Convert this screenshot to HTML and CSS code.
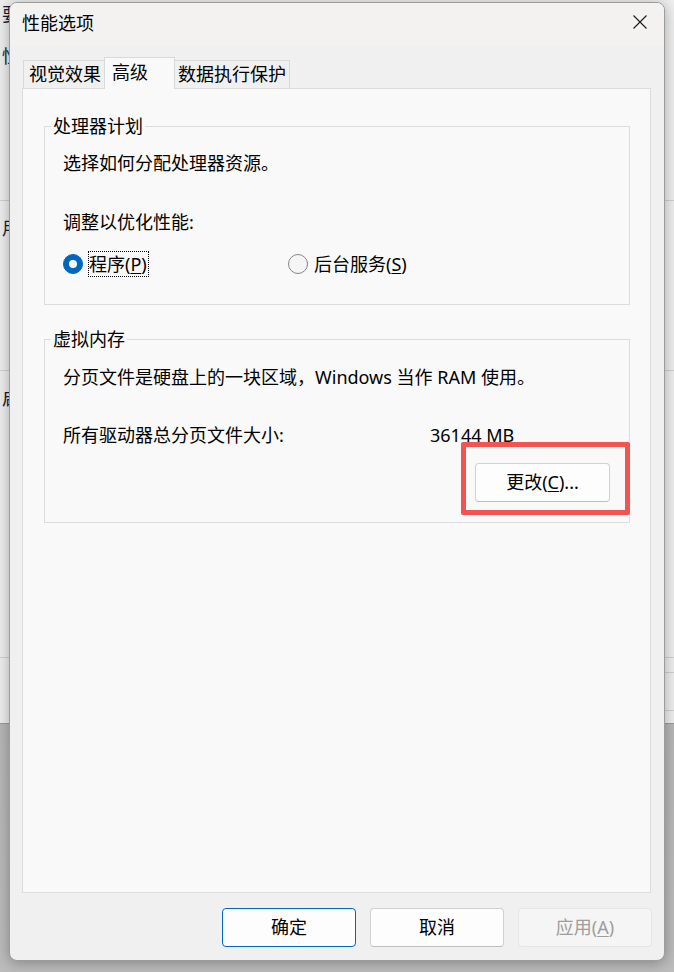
FILE: index.html
```html
<!DOCTYPE html>
<html lang="zh-CN">
<head>
    <meta charset="UTF-8">
    <meta name="viewport" content="width=device-width, initial-scale=1.0">
    <title>性能选项</title>
    <link rel="stylesheet" href="styles.css">
</head>
<body>
    <!-- 后面的系统属性窗口 -->
    <div class="behind">
        <p class="b-line">要进行大多数更改，你必须作为管理员登录。</p>
        <p class="b-line b-perf">性能</p>
        <div class="b-rule b-rule1"></div>
        <p class="b-line b-after">用户配置文件</p>
        <div class="b-rule b-rule2"></div>
        <p class="b-line b-after">启动和故障恢复</p>
        <div class="b-rule b-rule3"></div>
        <div class="b-rule b-rule4"></div>
        <div class="b-rule b-rule5"></div>
    </div>

    <div class="dialog">
        <div class="titlebar">
            <span class="title">性能选项</span>
            <svg class="close" width="14" height="14" viewBox="0 0 14 14">
                <path d="M0.5 0.5 L13.5 13.5 M13.5 0.5 L0.5 13.5" stroke="#1a1a1a" stroke-width="1.1" fill="none"/>
            </svg>
        </div>

        <div class="tabs">
            <div class="tab tab-visual">视觉效果</div>
            <div class="tab active">高级</div>
            <div class="tab tab-dep">数据执行保护</div>
        </div>

        <div class="panel">
            <fieldset class="group group-cpu">
                <legend>处理器计划</legend>
                <p class="line">选择如何分配处理器资源。</p>
                <p class="line line-adjust">调整以优化性能:</p>
                <div class="radios">
                    <label class="radio radio-first checked"><span class="dot"></span><span class="radio-text focus">程序(<u>P</u>)</span></label>
                    <label class="radio"><span class="dot"></span><span class="radio-text">后台服务(<u>S</u>)</span></label>
                </div>
            </fieldset>

            <fieldset class="group group-mem">
                <legend>虚拟内存</legend>
                <p class="line">分页文件是硬盘上的一块区域，Windows 当作 RAM 使用。</p>
                <div class="line size-row">
                    <span class="size-label">所有驱动器总分页文件大小:</span>
                    <span>36144 MB</span>
                </div>
                <div class="change-row">
                    <div class="mark">
                        <button class="btn btn-change">更改(<u>C</u>)...</button>
                        <span class="highlight"></span>
                    </div>
                </div>
            </fieldset>
        </div>

        <div class="footer">
            <button class="btn default">确定</button>
            <button class="btn">取消</button>
            <button class="btn" disabled>应用(<u>A</u>)</button>
        </div>
    </div>
</body>
</html>
```

FILE: styles.css
```css
* {
    box-sizing: border-box;
}
body {
    margin: 0;
    width: 674px;
    height: 972px;
    overflow: hidden;
    position: relative;
    background: linear-gradient(#a8a8a8, #bcbcbc);
    font-family: "Noto Sans", "Noto Sans CJK SC", sans-serif;
    font-size: 18px;
    color: #000;
}
p {
    margin: 0;
}
u {
    text-underline-offset: 2px;
}

/* background window, only its left edge shows */
.behind {
    position: absolute;
    left: 0;
    top: 0;
    width: 674px;
    height: 724px;
    padding: 1px 0 0 2px;
    background: #eeeeee;
    border-bottom: 1px solid #9a9a9a;
    font-family: "Noto Sans CJK SC", sans-serif;
    color: #1a1a3a;
}
.b-line {
    width: 8px;
    height: 24px;
    line-height: 24px;
    overflow: hidden;
    white-space: nowrap;
}
.b-perf {
    margin-top: 18px;
}
.b-after {
    margin-top: 14px;
}
.b-rule {
    height: 1px;
    margin-left: -2px;
    background: #d0d0d0;
}
.b-rule1 {
    margin-top: 133px;
}
.b-rule2 {
    margin-top: 131px;
}
.b-rule3 {
    margin-top: 248px;
}
.b-rule4 {
    margin-top: 14px;
    margin-left: 600px;
}
.b-rule5 {
    margin-top: 37px;
    margin-left: 600px;
}

/* dialog */
.dialog {
    position: absolute;
    left: 9px;
    top: 2px;
    width: 656px;
    height: 959px;
    display: flex;
    flex-direction: column;
    overflow: hidden;
    background: #f0f0f0;
    border: 1px solid #9c9c9c;
    border-radius: 8px;
    box-shadow: 0 2px 14px rgba(0,0,0,0.3);
}
.titlebar {
    flex: none;
    height: 42px;
    display: flex;
    align-items: flex-start;
    justify-content: space-between;
    padding: 7px 17px 0 12px;
    background: #f3f2f1;
}
.title {
    line-height: 24px;
    font-family: "Noto Sans CJK SC", sans-serif;
}
.close {
    margin-top: 5px;
}

.tabs {
    flex: none;
    height: 31px;
    margin-top: 12px;
    padding-left: 13px;
    display: flex;
    align-items: flex-end;
    position: relative;
    z-index: 1;
}
.tab {
    height: 28px;
    line-height: 26px;
    padding-left: 5px;
    white-space: nowrap;
    background: #f0f0f0;
    border: 1px solid #d9d9d9;
    border-bottom: none;
}
.tab-visual {
    width: 82px;
}
.tab.active {
    width: 71px;
    height: 32px;
    line-height: 28px;
    margin-left: -1px;
    margin-bottom: -1px;
    padding-left: 7px;
    background: #f9f9f9;
}
.tab-dep {
    width: 116px;
    margin-left: -1px;
    padding-left: 3px;
}

.panel {
    flex: none;
    height: 805px;
    margin: 0 13px 0 12px;
    padding: 0 20px 0 21px;
    background: #f9f9f9;
    border: 1px solid #dcdcdc;
}

.group {
    min-width: 0;
    margin: 0;
    border: 1px solid #dcdcdc;
    padding: 13px 19px 27px 6px;
}
.group legend {
    height: 24px;
    line-height: 24px;
    padding: 0 2px;
}
.group-cpu {
    margin-top: 25px;
}
.group-mem {
    margin-top: 22px;
    padding-top: 14px;
    padding-bottom: 20px;
}
.line {
    height: 24px;
    line-height: 24px;
    padding-left: 12px;
    white-space: nowrap;
}
.line-adjust {
    margin-top: 35px;
}

.radios {
    display: flex;
    height: 26px;
    margin-top: 17px;
    padding-left: 12px;
}
.radio {
    display: flex;
    align-items: center;
    gap: 5px;
    height: 26px;
}
.radio-first {
    width: 225px;
}
.dot {
    flex: none;
    width: 20px;
    height: 20px;
    border-radius: 50%;
    border: 1px solid #878787;
    background: #f5f5f5;
}
.radio.checked .dot {
    display: flex;
    align-items: center;
    justify-content: center;
    border-color: #0067c0;
    background: #0067c0;
}
.radio.checked .dot::after {
    content: "";
    width: 8px;
    height: 8px;
    border-radius: 50%;
    background: #fff;
}
.radio-text {
    line-height: 24px;
    padding-right: 1px;
    border: 1px solid transparent;
    white-space: nowrap;
}
.radio-text.focus {
    border: 1px dotted #000;
}

.size-row {
    display: flex;
    margin-top: 34px;
}
.size-label {
    width: 367px;
    flex: none;
}
.change-row {
    display: flex;
    justify-content: flex-end;
    margin-top: 16px;
}
.mark {
    position: relative;
}
.highlight {
    position: absolute;
    left: -14px;
    right: -20px;
    top: -21px;
    bottom: -13px;
    border: 5px solid #f25454;
    border-radius: 2px;
}

.btn {
    display: block;
    width: 134px;
    height: 39px;
    padding: 0;
    font: inherit;
    line-height: 37px;
    color: #000;
    background: #fdfdfd;
    border: 1px solid #d1d1d1;
    border-bottom-color: #bdbdbd;
    border-radius: 4px;
}
.btn-change {
    width: 135px;
}
.btn.default {
    border-color: #0067c0;
}
.btn:disabled {
    color: #9d9d9d;
    background: #f5f5f5;
    border-color: #e6e6e6;
}

.footer {
    flex: none;
    display: flex;
    justify-content: flex-end;
    gap: 14px;
    padding: 15px 12px 0;
}
```
